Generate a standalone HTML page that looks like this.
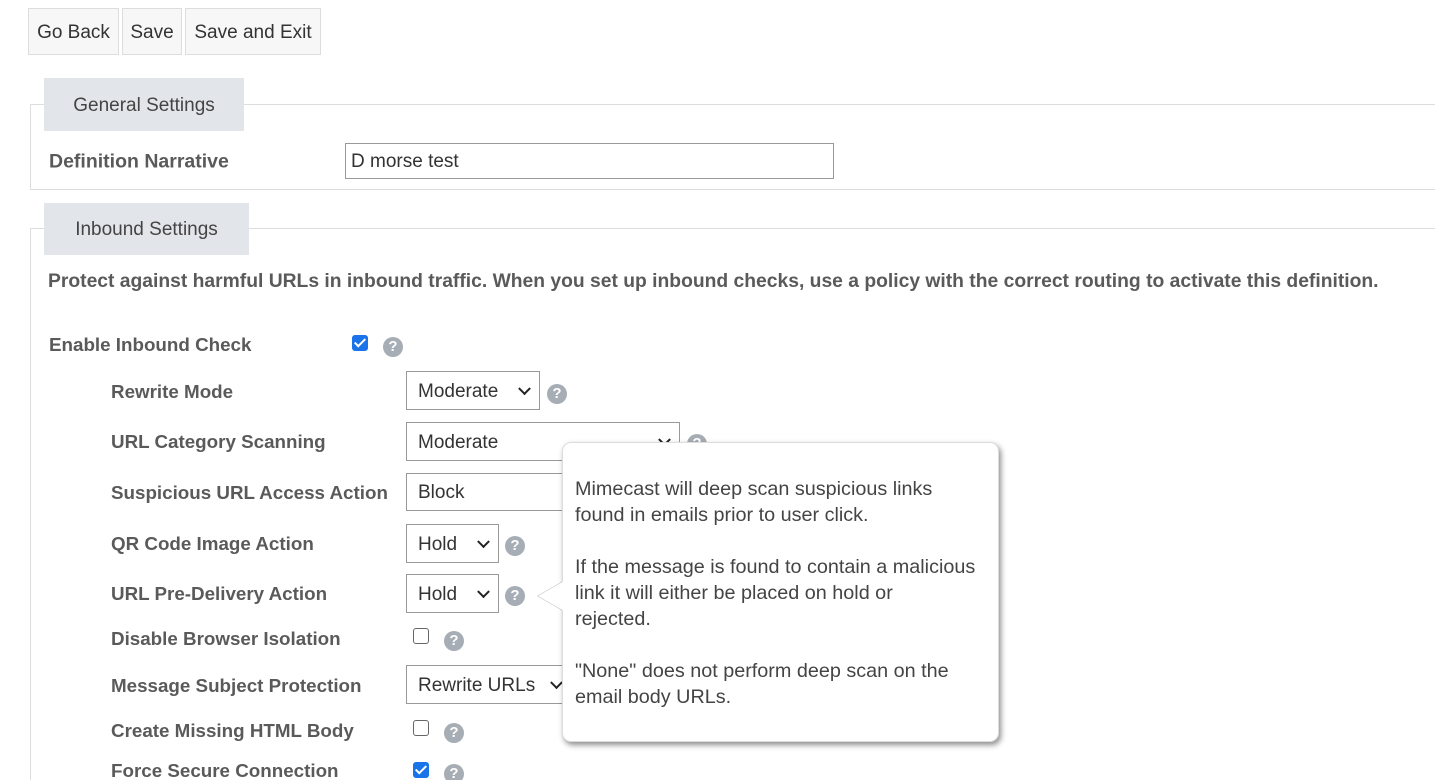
<!DOCTYPE html>
<html><head><style>
html,body{margin:0;width:1435px;height:780px;overflow:hidden}
body{background:#fff;font-family:"Liberation Sans",sans-serif;color:#444;position:relative}
.a{position:absolute}
.btn{position:absolute;top:8px;height:45px;background:#f7f7f7;border:1px solid #ddd;font-size:19px;line-height:47px;text-align:center;color:#333}
.leg{position:absolute;background:#e2e5e9;font-size:19px;color:#444;text-align:center}
.lbl{position:absolute;font-size:18.8px;font-weight:bold;color:#5a5a5a;transform:translateY(-50%);white-space:nowrap}
.sel{position:absolute;border:1px solid #999;background:#fff;font-size:19px;color:#333;box-sizing:border-box;padding-left:11px}
.sel i{position:absolute;right:10px;top:50%;width:7px;height:7px;border-right:2.5px solid #222;border-bottom:2.5px solid #222;transform:translateY(-75%) rotate(45deg)}
.help{position:absolute;width:20px;height:20px;border-radius:50%;background:#a6adb4;color:#fff;font-weight:bold;font-size:15px;line-height:20px;text-align:center}
.cb{position:absolute;width:14px;height:14px;border:1.5px solid #666;border-radius:3px;background:#fff}
.cb.on{background:#1a73e8;border-color:#1a73e8}
.cb.on:after{content:"";position:absolute;left:4px;top:0px;width:4px;height:9px;border-right:2px solid #fff;border-bottom:2px solid #fff;transform:rotate(45deg)}
</style></head><body>
<div class="btn" style="left:28px;width:89px">Go Back</div>
<div class="btn" style="left:122px;width:58px">Save</div>
<div class="btn" style="left:185px;width:134px">Save and Exit</div>

<div class="a" style="left:30px;top:104px;width:1420px;height:84px;border:1px solid #ddd"></div>
<div class="leg" style="left:44px;top:78px;width:200px;height:53px;line-height:55px">General Settings</div>
<div class="lbl" style="left:49px;top:162px;font-size:19.5px">Definition Narrative</div>
<div class="sel" style="left:345px;top:143px;width:489px;height:36px;line-height:36px;padding-left:5px">D morse test</div>

<div class="a" style="left:30px;top:228px;width:1420px;height:560px;border:1px solid #ddd;border-bottom:none"></div>
<div class="leg" style="left:44px;top:203px;width:205px;height:52px;line-height:54px">Inbound Settings</div>
<div class="lbl" style="left:48px;top:282px;font-size:19.3px">Protect against harmful URLs in inbound traffic. When you set up inbound checks, use a policy with the correct routing to activate this definition.</div>

<div class="lbl" style="left:49px;top:345px">Enable Inbound Check</div>
<div class="cb on" style="left:352px;top:335px"></div><div class="help" style="left:383px;top:337px">?</div>

<div class="lbl" style="left:111px;top:392px">Rewrite Mode</div>
<div class="sel" style="left:406px;top:371px;width:134px;height:39px;line-height:39px">Moderate<i></i></div><div class="help" style="left:547px;top:384px">?</div>

<div class="lbl" style="left:111px;top:442px">URL Category Scanning</div>
<div class="sel" style="left:406px;top:422px;width:274px;height:39px;line-height:39px">Moderate<i></i></div><div class="help" style="left:687px;top:434px">?</div>

<div class="lbl" style="left:111px;top:493px">Suspicious URL Access Action</div>
<div class="sel" style="left:406px;top:473px;width:200px;height:38px;line-height:38px">Block</div>

<div class="lbl" style="left:111px;top:544px">QR Code Image Action</div>
<div class="sel" style="left:406px;top:524px;width:93px;height:39px;line-height:39px">Hold<i></i></div><div class="help" style="left:505px;top:536px">?</div>

<div class="lbl" style="left:111px;top:594px">URL Pre-Delivery Action</div>
<div class="sel" style="left:406px;top:574px;width:93px;height:39px;line-height:39px">Hold<i></i></div><div class="help" style="left:505px;top:586px">?</div>

<div class="lbl" style="left:111px;top:639px">Disable Browser Isolation</div>
<div class="cb" style="left:413px;top:628px"></div><div class="help" style="left:444px;top:631px">?</div>

<div class="lbl" style="left:111px;top:686px">Message Subject Protection</div>
<div class="sel" style="left:406px;top:665px;width:170px;height:39px;line-height:39px">Rewrite URLs<i style="right:14px"></i></div>

<div class="lbl" style="left:111px;top:731px">Create Missing HTML Body</div>
<div class="cb" style="left:413px;top:720px"></div><div class="help" style="left:444px;top:723px">?</div>

<div class="lbl" style="left:111px;top:771px">Force Secure Connection</div>
<div class="cb on" style="left:413px;top:762px"></div><div class="help" style="left:444px;top:764px">?</div>

<svg class="a" style="left:534px;top:575px" width="40" height="40"><polygon points="4,21 30,6 30,36" fill="#fff"/><path d="M30,6 L4,21 L30,36" fill="none" stroke="#bbb" stroke-width="1"/></svg>
<div class="a" style="left:562px;top:442px;width:437px;height:300px;background:#fff;border-radius:9px;box-shadow:2px 3px 6px rgba(0,0,0,.45);border:1px solid #ddd;box-sizing:border-box"></div>
<div class="a" style="left:534px;top:575px;width:40px;height:40px"><svg width="40" height="40"><polygon points="4,21 30,6 30,36" fill="#fff"/></svg></div>
<div class="a" style="left:575px;top:476px;font-size:19.8px;line-height:26px;color:#444;width:424px;white-space:nowrap">Mimecast will deep scan suspicious links<br>found in emails prior to user click.<br><br>If the message is found to contain a malicious<br>link it will either be placed on hold or<br>rejected.<br><br>"None" does not perform deep scan on the<br>email body URLs.</div>
</body></html>
